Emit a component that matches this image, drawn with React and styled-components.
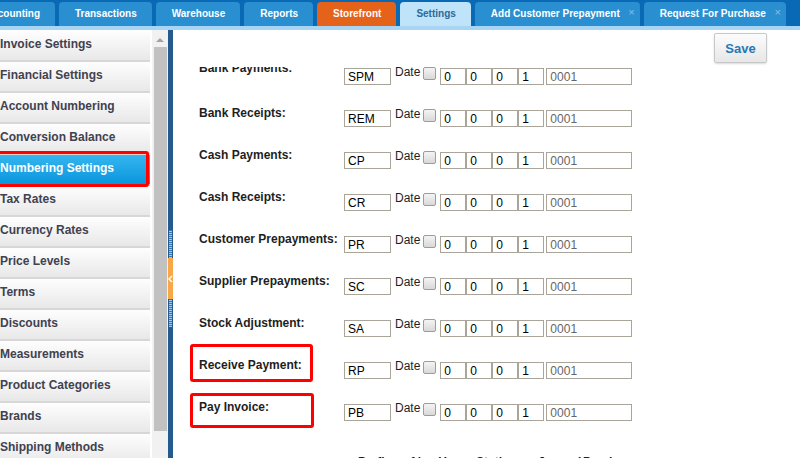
import React from 'react';
import styled, { createGlobalStyle, css } from 'styled-components';

const GlobalStyle = createGlobalStyle`
  html, body {
    margin: 0;
    padding: 0;
  }
  body {
    font-family: "Liberation Sans", Arial, sans-serif;
    background: #fff;
    overflow: hidden;
  }
`;

const Page = styled.div`
  width: 800px;
  height: 458px;
  display: flex;
  flex-direction: column;
  overflow: hidden;
`;

const TabBar = styled.div`
  flex: none;
  height: 26px;
  background: #0a69b4;
  border-bottom: 4px solid #a8d5f3;
  overflow: hidden;
`;

const TabRow = styled.div`
  display: flex;
  align-items: flex-end;
  gap: 4px;
  height: 100%;
  margin-left: -31px;
`;

const Tab = styled.div`
  position: relative;
  flex: none;
  height: 24px;
  line-height: 24px;
  padding: 0 15px 0 16px;
  border-radius: 4px 4px 0 0;
  background: #2a8fd0;
  color: #fff;
  font-size: 10px;
  font-weight: bold;
  white-space: nowrap;
  ${p => p.$closable && css`
    padding-right: 20px;
  `}
  ${p => p.$variant === 'orange' && css`
    background: #e5621b;
  `}
  ${p => p.$variant === 'current' && css`
    background: #bfe3f8;
    color: #2b6a9a;
  `}
`;

const TabClose = styled.span`
  position: absolute;
  top: -2px;
  right: 5px;
  font-size: 11px;
  font-weight: normal;
  color: #86bde6;
`;

const Body = styled.div`
  flex: 1;
  display: flex;
  min-height: 0;
`;

const Menu = styled.ul`
  flex: none;
  width: 150px;
  margin: 0;
  padding: 1px 0 0;
  list-style: none;
  overflow: hidden;
`;

const MenuItem = styled.li`
  position: relative;
  height: 29px;
  line-height: 27px;
  border-bottom: 2px solid #d8d6d6;
  background: linear-gradient(#fefefe, #e8e8e8);
  color: #41414f;
  font-size: 12px;
  font-weight: bold;
  white-space: nowrap;
  ${p => p.$active && css`
    background: linear-gradient(#36b5f0, #0996dd);
    color: #fff;
  `}
  ${p => p.$marked && css`
    z-index: 1;
    &::after {
      content: '';
      position: absolute;
      left: -3px;
      right: 1px;
      top: -4px;
      bottom: -3px;
      border: 3px solid #f00;
      border-radius: 3px;
    }
  `}
`;

const ScrollTrack = styled.div`
  flex: none;
  width: 16px;
  margin-left: 2px;
  background: #f1f1f1;
  display: flex;
  flex-direction: column;
  align-items: center;
`;

const ScrollArrow = styled.div`
  width: 0;
  height: 0;
  margin-top: 8px;
  border-left: 4px solid transparent;
  border-right: 4px solid transparent;
  border-bottom: 4px solid #a3a3a3;
`;

const ScrollThumb = styled.div`
  width: 13px;
  height: 384px;
  margin-top: 5px;
  background: #c1c1c1;
`;

const Splitter = styled.div`
  flex: none;
  width: 5px;
  padding-top: 200px;
  background: #245a8e;
`;

const Grip = styled.div`
  height: 28px;
  margin: 0 1px;
  background: repeating-linear-gradient(#3a78b2 0 1px, #a2c7e8 1px 2px);
`;

const Collapse = styled.div`
  height: 41px;
  background: #f8a848;
  display: flex;
  align-items: center;
  justify-content: center;
`;

const Main = styled.div`
  flex: 1;
  display: flex;
  flex-direction: column;
  min-width: 0;
`;

const TopBar = styled.div`
  flex: none;
  height: 37px;
  box-sizing: border-box;
  padding: 3px 33px 0 0;
  display: flex;
  justify-content: flex-end;
  align-items: flex-start;
`;

const SaveButton = styled.button`
  width: 53px;
  height: 30px;
  padding: 0;
  border: 1px solid #c8c8c8;
  border-radius: 2px;
  background: linear-gradient(#fcfcfc, #e7e7e7);
  box-shadow: 0 1px 2px rgba(0, 0, 0, 0.15);
  color: #2777b7;
  font-family: "Liberation Sans", Arial, sans-serif;
  font-size: 13px;
  font-weight: bold;
`;

const FormScroll = styled.div`
  flex: 1;
  overflow: hidden;
`;

const FormBody = styled.div`
  margin-top: -3px;
  padding-left: 26px;
`;

const Row = styled.div`
  display: flex;
  align-items: flex-start;
  height: 42px;
`;

const Label = styled.div`
  position: relative;
  flex: none;
  width: 145px;
  margin-top: ${p => p.$lift || 0}px;
  font-size: 12px;
  line-height: 14px;
  font-weight: bold;
  color: #1e1e1e;
  white-space: nowrap;
  ${p => p.$mark && css`
    &::after {
      content: '';
      position: absolute;
      left: -9px;
      top: ${p.$mark.top}px;
      width: ${p.$mark.w}px;
      height: ${p.$mark.h}px;
      box-sizing: border-box;
      border: 3px solid #f00;
      border-radius: 3px;
    }
  `}
`;

const Field = styled.input`
  flex: none;
  box-sizing: border-box;
  width: ${p => p.$w}px;
  height: 17px;
  margin: 4px 0 0 ${p => p.$gap || 0}px;
  padding: 0 3px;
  border: 1px solid #aaa59a;
  border-radius: 0;
  background: #fff;
  color: ${p => (p.$muted ? '#666' : '#000')};
  font-family: "Liberation Sans", Arial, sans-serif;
  font-size: 12px;
  outline: none;
`;

const DateText = styled.span`
  flex: none;
  margin: 1px 0 0 4px;
  font-size: 12px;
  line-height: 14px;
  color: #1e1e1e;
`;

const Check = styled.span`
  flex: none;
  width: 13px;
  height: 13px;
  box-sizing: border-box;
  margin: 3px 0 0 3px;
  border: 1px solid #9c9c9c;
  border-radius: 2px;
  background: linear-gradient(#f4f4f4, #d8d8d8);
`;

const HeadRow = styled.div`
  display: flex;
  margin-top: 13px;
  padding-left: 159px;
  font-size: 12px;
  line-height: 14px;
  font-weight: bold;
  color: #1e1e1e;
  white-space: nowrap;
`;

const HeadCell = styled.span`
  flex: none;
  width: ${p => p.$w}px;
`;

const tabs = [
  { name: 'Accounting' },
  { name: 'Transactions' },
  { name: 'Warehouse' },
  { name: 'Reports' },
  { name: 'Storefront', variant: 'orange' },
  { name: 'Settings', variant: 'current' },
  { name: 'Add Customer Prepayment', closable: true },
  { name: 'Request For Purchase', closable: true },
];

const menu = [
  'Invoice Settings',
  'Financial Settings',
  'Account Numbering',
  'Conversion Balance',
  'Numbering Settings',
  'Tax Rates',
  'Currency Rates',
  'Price Levels',
  'Terms',
  'Discounts',
  'Measurements',
  'Product Categories',
  'Brands',
  'Shipping Methods',
];

const rows = [
  { label: 'Bank Payments:', prefix: 'SPM', lift: -3 },
  { label: 'Bank Receipts:', prefix: 'REM' },
  { label: 'Cash Payments:', prefix: 'CP' },
  { label: 'Cash Receipts:', prefix: 'CR' },
  { label: 'Customer Prepayments:', prefix: 'PR' },
  { label: 'Supplier Prepayments:', prefix: 'SC' },
  { label: 'Stock Adjustment:', prefix: 'SA' },
  { label: 'Receive Payment:', prefix: 'RP', mark: { top: -14, h: 38, w: 123 } },
  { label: 'Pay Invoice:', prefix: 'PB', mark: { top: -7, h: 35, w: 124 } },
];

const heads = [
  { text: 'Prefix', w: 51 },
  { text: 'Also Uses', w: 67 },
  { text: 'Station', w: 62 },
  { text: 'Journal', w: 45 },
  { text: 'Previous', w: 80 },
];

const App = () => {
  return (
    <Page>
      <GlobalStyle />
      <TabBar>
        <TabRow>
          {tabs.map(t => (
            <Tab key={t.name} $variant={t.variant} $closable={t.closable}>
              {t.name}
              {t.closable && <TabClose>×</TabClose>}
            </Tab>
          ))}
        </TabRow>
      </TabBar>
      <Body>
        <Menu>
          {menu.map(m => (
            <MenuItem
              key={m}
              $active={m === 'Numbering Settings'}
              $marked={m === 'Numbering Settings'}
            >
              {m}
            </MenuItem>
          ))}
        </Menu>
        <ScrollTrack>
          <ScrollArrow />
          <ScrollThumb />
        </ScrollTrack>
        <Splitter>
          <Grip />
          <Collapse>
            <svg width="5" height="8" viewBox="0 0 5 8">
              <path d="M4 1 L1 4 L4 7" fill="none" stroke="#fff" strokeWidth="1.4" />
            </svg>
          </Collapse>
          <Grip />
        </Splitter>
        <Main>
          <TopBar>
            <SaveButton>Save</SaveButton>
          </TopBar>
          <FormScroll>
            <FormBody>
              {rows.map(r => (
                <Row key={r.label}>
                  <Label $mark={r.mark} $lift={r.lift}>{r.label}</Label>
                  <Field $w={47} defaultValue={r.prefix} readOnly />
                  <DateText>Date</DateText>
                  <Check />
                  <Field $w={26} $gap={4} defaultValue="0" readOnly />
                  <Field $w={26} defaultValue="0" readOnly />
                  <Field $w={26} defaultValue="0" readOnly />
                  <Field $w={26} defaultValue="1" readOnly />
                  <Field $w={86} $gap={2} $muted defaultValue="0001" readOnly />
                </Row>
              ))}
              <HeadRow>
                {heads.map(h => (
                  <HeadCell key={h.text} $w={h.w}>{h.text}</HeadCell>
                ))}
              </HeadRow>
            </FormBody>
          </FormScroll>
        </Main>
      </Body>
    </Page>
  );
};

export default App;
